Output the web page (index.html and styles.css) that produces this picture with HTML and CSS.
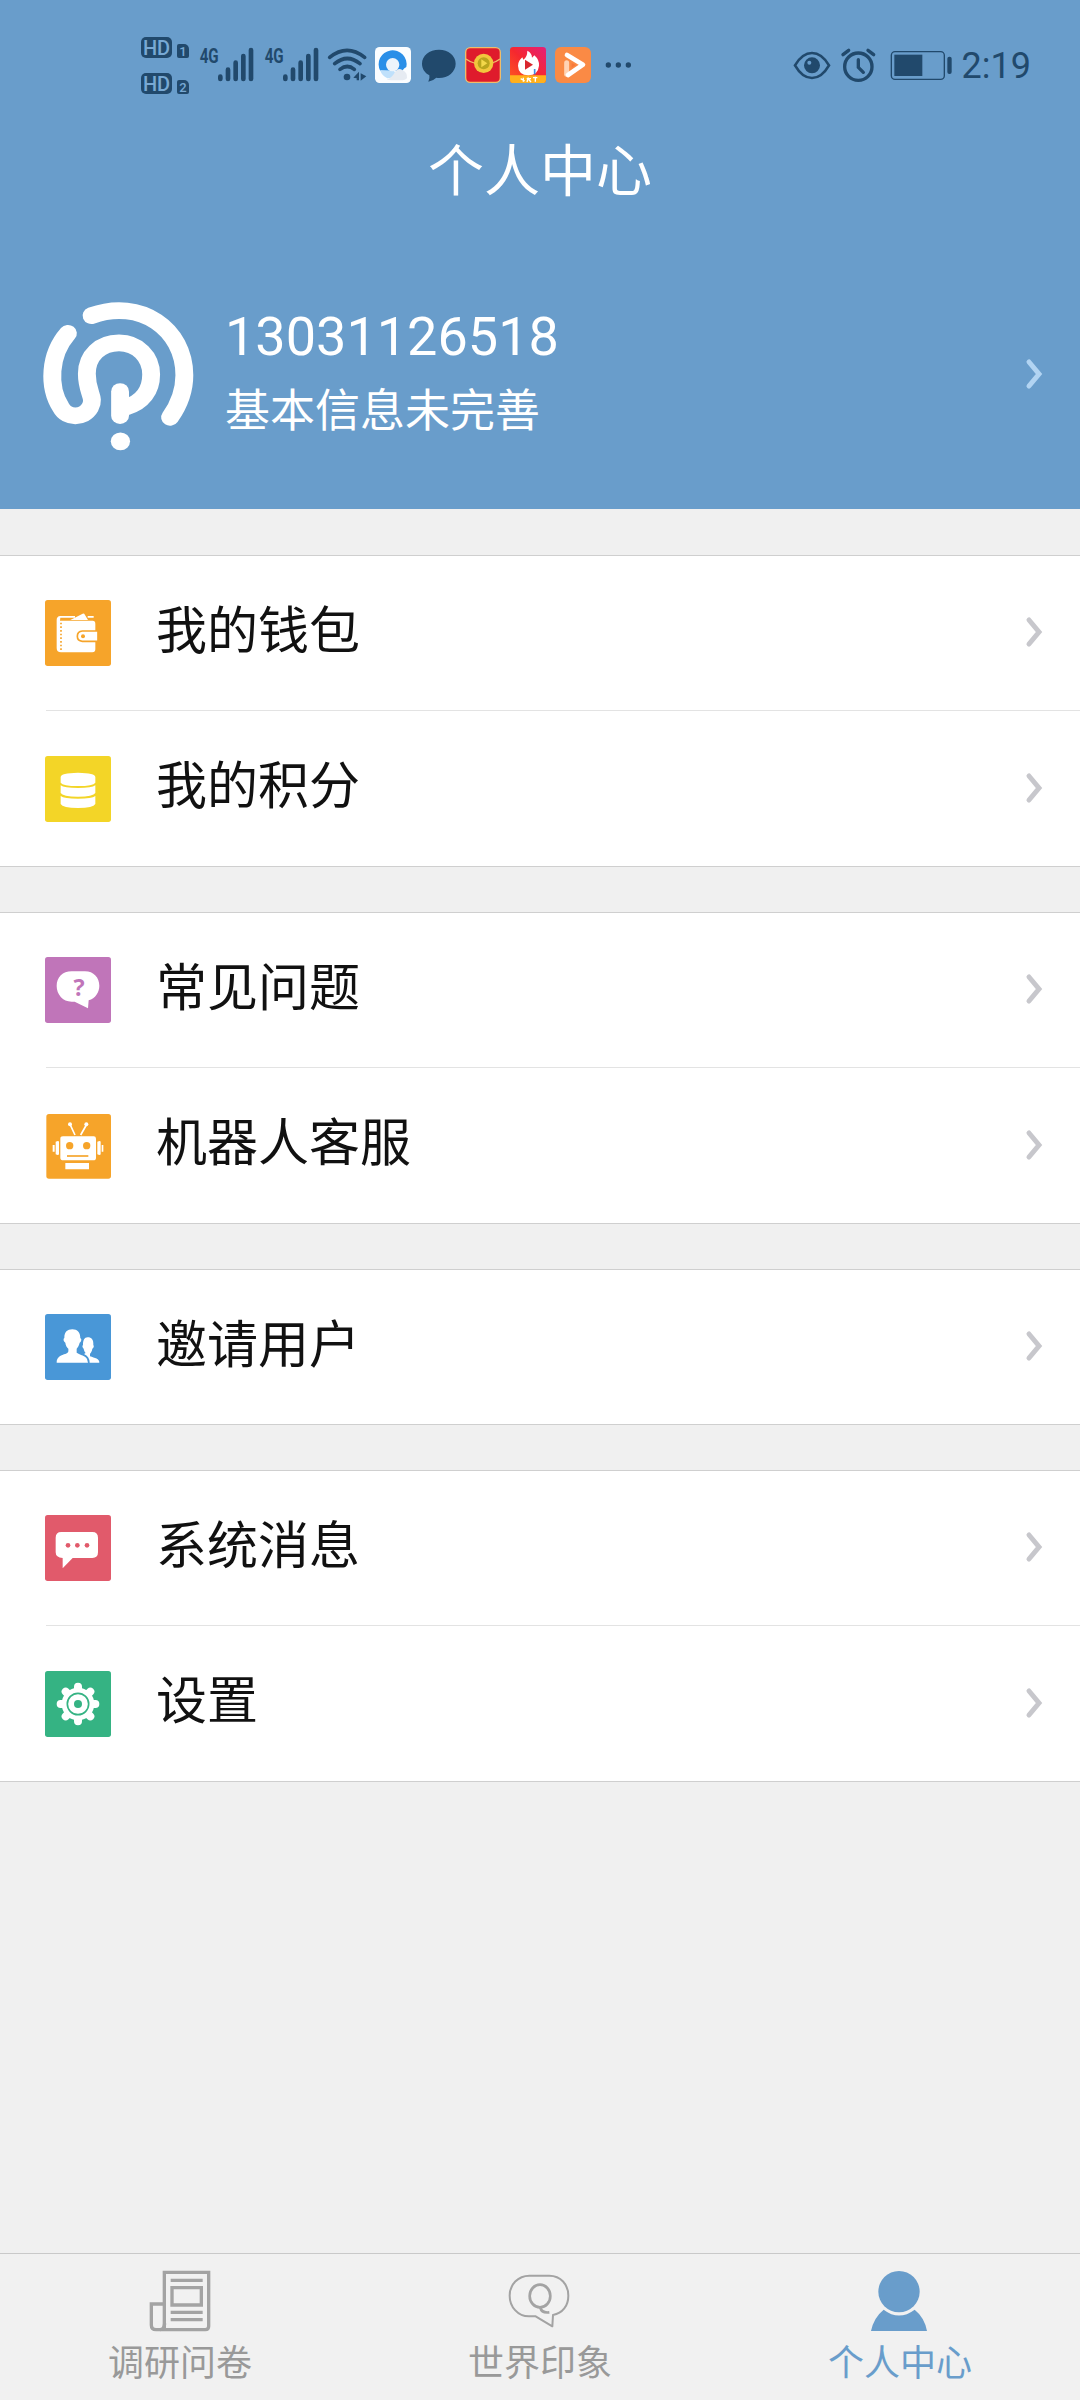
FILE: index.html
```html
<!DOCTYPE html>
<html lang="zh-CN">
<head>
  <meta charset="UTF-8" />
  <meta name="viewport" content="width=device-width, initial-scale=1.0"/>
  <title>个人中心</title>
  <link rel="stylesheet" href="styles.css">
</head>
<body>
  <header class="header">
    <div class="status-bar">
      <div class="status-left">
        <div class="hd-list">
          <div class="hd"><span class="hd-tag">HD</span><span class="hd-num">1</span></div>
          <div class="hd"><span class="hd-tag">HD</span><span class="hd-num">2</span></div>
        </div>
        <svg class="ink" width="55" height="44" viewBox="207 69 165 132">
          <text class="net" x="209" y="129" textLength="57" lengthAdjust="spacingAndGlyphs">4G</text>
          <path class="bars" d="M271 170v7M294 149v28M317 128v49M340 108v69M363 90v87"/>
        </svg>
        <svg class="ink" width="55" height="44" viewBox="204 69 165 132">
          <text class="net" x="209" y="129" textLength="57" lengthAdjust="spacingAndGlyphs">4G</text>
          <path class="bars" d="M271 170v7M294 149v28M317 128v49M340 108v69M363 90v87"/>
        </svg>
        <svg class="ink" width="39" height="36" viewBox="591 81 117 108">
          <path class="wifi" d="M599 112q52-42 105 0M614 131q38-31 76 0M630 148q22-17 43 0"/>
          <circle cx="651" cy="171" r="10"/>
          <path d="M670 173l17-18v26h-7v-6zM692 160l17 9-17 13z"/>
        </svg>
        <svg width="36" height="36" viewBox="15 81 108 108">
          <rect x="15" y="81" width="108" height="108" rx="14" fill="#fbfdff"/>
          <path d="M31 153a42 42 0 1 1 78-12q-7 3-13 13l-20-2z" fill="#2a8fe8"/>
          <path d="M30 150a42 42 0 0 0 22 25l30-3-10-20z" fill="#bfe0fb"/>
          <circle cx="68" cy="134" r="20" fill="#edf4fb"/>
          <path d="M50 178q14-3 24-20q9-16 23-8q16 8 14 24q-4 7-20 7H65q-10 0-15-3z" fill="#e6ebf2"/>
        </svg>
        <svg class="ink" width="36" height="36" viewBox="150 81 108 108">
          <path d="M207 89c28 0 50 18 50 42s-22 43-50 43q-4 0-8-1-9 9-24 12 5-9 3-19c-14-8-22-20-22-35 0-24 22-42 51-42z"/>
        </svg>
        <svg width="36" height="36" viewBox="285 81 108 108">
          <rect x="287" y="83" width="104" height="104" rx="14" fill="#df1b2c" stroke="#f0bd69" stroke-width="4"/>
          <path d="M288 117q20 15 51 15t51-15" fill="none" stroke="#f0bd69" stroke-width="4"/>
          <circle cx="341" cy="130" r="29" fill="#f2c73d"/>
          <circle cx="341" cy="130" r="18" fill="#b9a51d"/>
          <path d="M334 118l18 12-18 12z" fill="#f3d84a"/>
        </svg>
        <svg width="36" height="36" viewBox="420 81 108 108">
          <defs>
            <linearGradient id="fire" x1="0" x2="1" y1="1" y2="0">
              <stop offset="0" stop-color="#ff5a1f"/>
              <stop offset=".5" stop-color="#f5282f"/>
              <stop offset="1" stop-color="#e51f78"/>
            </linearGradient>
          </defs>
          <rect x="420" y="81" width="108" height="108" rx="10" fill="url(#fire)"/>
          <path d="M420 166h108v13q0 10-10 10h-88q-10 0-10-10z" fill="#ffb01c"/>
          <path d="M472 92q14 7 14 21l7-7q15 13 14 31-3 29-32 29-30-1-31-29 0-14 13-25l3 7q12-8 12-27z" fill="#fff"/>
          <path d="M465 119l24 15-24 15z" fill="#d9272e"/>
          <path d="M494 147v16" stroke="#438ce0" stroke-width="5"/>
          <path d="M452 176l12 7m-4-10v12m10-9h13m-8-4l-4 14m4-9l8 9m6-13h13m-6-3v15" stroke="#fff" stroke-width="4"/>
        </svg>
        <svg width="36" height="36" viewBox="555 81 108 108">
          <rect x="555" y="81" width="108" height="108" rx="18" fill="#fa8a45"/>
          <path d="M590 128v35" stroke="#ffd3b4" stroke-width="15" stroke-linecap="round"/>
          <path d="M591 105l48 29-45 31" fill="none" stroke="#fff" stroke-width="14" stroke-linecap="round" stroke-linejoin="round"/>
          <path d="M605 129l12 6-12 8z" fill="#f8783a"/>
        </svg>
        <svg class="ink" width="36" height="36" viewBox="690 81 108 108">
          <circle cx="715" cy="135" r="8"/><circle cx="745" cy="135" r="8"/><circle cx="775" cy="135" r="8"/>
        </svg>
      </div>
      <div class="status-right">
        <svg class="ink" width="36" height="36" viewBox="42 81 108 108">
          <path class="line" d="M45 136q22-37 51-37t51 37q-22 38-51 38t-51-38z"/>
          <circle cx="96" cy="136" r="24"/>
          <circle class="glint" cx="88" cy="128" r="6"/>
        </svg>
        <svg class="ink" width="34" height="36" viewBox="186 81 102 108">
          <circle class="line alarm" cx="235" cy="140" r="41"/>
          <path class="line alarm" d="M235 119v23l15 15M189 104l17-13M281 104l-17-13"/>
        </svg>
        <svg class="ink" width="64" height="36" viewBox="324 81 192 108">
          <rect class="thin" x="334" y="95" width="159" height="83" rx="11"/>
          <rect x="343" y="104" width="84" height="64"/>
          <rect x="502" y="110" width="13" height="52" rx="6"/>
        </svg>
        <span class="clock">2:19</span>
      </div>
    </div>
    <h1 class="title">个人中心</h1>
    <div class="profile">
      <svg class="avatar" width="150" height="154" viewBox="40 52 420 463" preserveAspectRatio="none">
        <path d="M173 105C310 52 433 145 433 284Q433 350 393 411"/>
        <path d="M107 158C55 222 50 318 88 382C104 414 151 415 169 381C185 350 160 338 160 280C160 225 198 187 250 187S340 229 340 282C340 330 315 366 270 380"/>
        <path d="M253 333v73"/>
        <circle cx="254" cy="483" r="27"/>
      </svg>
      <div class="profile-info">
        <div class="phone">13031126518</div>
        <div class="hint">基本信息未完善</div>
      </div>
      <svg class="arrow" width="18" height="32" viewBox="0 0 18 32"><path d="M4 3l10 12L4 27"/></svg>
    </div>
  </header>

  <main class="menu">
    <section class="group">
      <a class="row">
        <svg class="icon" viewBox="0 0 198 198">
          <rect width="198" height="198" rx="8" fill="#f6a42a"/>
          <path d="M45 62h98q8 0 8 9v77q0 9-9 9H48q-13 0-13-13V60q0-11 11-12h44v5H46z" fill="#fff"/>
          <path d="M76 60l37-19q5-1 7 4l9 15zM128 48h18v5h-18z" fill="#fff"/>
          <path d="M48 68v82" stroke="#f6a42a" stroke-width="5" stroke-dasharray="5 6"/>
          <path d="M159 93h-47q-15 1-15 16 0 14 15 15h47z" fill="#fff" stroke="#f6a42a" stroke-width="5"/>
          <circle cx="114" cy="109" r="6" fill="#f6a42a"/>
        </svg>
        <span class="label">我的钱包</span>
        <svg class="arrow" width="18" height="32" viewBox="0 0 18 32"><path d="M4 3l10 12L4 27"/></svg>
      </a>
      <a class="row">
        <svg class="icon" viewBox="0 0 198 198">
          <rect width="198" height="198" rx="8" fill="#f3d527"/>
          <path d="M47 63q0-12 52-13 52 1 52 13v17q-6 10-52 10-46 0-52-10zM47 88q10 8 52 8t52-8v23q-6 11-52 11-46 0-52-11zM47 120q10 8 52 8t52-8v24q-6 12-52 12-46 0-52-12z" fill="#fff"/>
        </svg>
        <span class="label">我的积分</span>
        <svg class="arrow" width="18" height="32" viewBox="0 0 18 32"><path d="M4 3l10 12L4 27"/></svg>
      </a>
    </section>

    <section class="group">
      <a class="row">
        <svg class="icon" viewBox="0 0 198 198">
          <rect width="198" height="198" rx="8" fill="#c075b9"/>
          <path d="M80 43h40c26 0 43 19 43 43 0 20-12 38-32 44l-2 24-40-20h-9c-27 0-45-22-45-47 0-26 18-44 45-44z" fill="#fff"/>
          <text class="ask" x="102" y="116" text-anchor="middle">?</text>
        </svg>
        <span class="label">常见问题</span>
        <svg class="arrow" width="18" height="32" viewBox="0 0 18 32"><path d="M4 3l10 12L4 27"/></svg>
      </a>
      <a class="row">
        <svg class="icon" viewBox="0 0 198 198">
          <rect x="4" y="3" width="194" height="194" rx="8" fill="#f6a42a"/>
          <path d="M90 66L76 36M107 66l17-30" stroke="#fff" stroke-width="5"/>
          <circle cx="75" cy="34" r="6" fill="#fff"/><circle cx="124" cy="34" r="6" fill="#fff"/>
          <path d="M54 70h92q7 0 7 7v57q0 8-8 8H55q-9 0-9-8V77q0-7 8-7zM61 150h71v19H61zM32 86q9-4 10 0v38q-2 4-10 0zM157 86q9-4 10 0v38q-2 4-10 0zM23 96h6v20h-6zM170 96h5v20h-5z" fill="#fff"/>
          <circle cx="74" cy="98" r="11" fill="#f6a42a"/><circle cx="125" cy="98" r="11" fill="#f6a42a"/>
          <path d="M66 129h64" stroke="#f6a42a" stroke-width="5"/>
        </svg>
        <span class="label">机器人客服</span>
        <svg class="arrow" width="18" height="32" viewBox="0 0 18 32"><path d="M4 3l10 12L4 27"/></svg>
      </a>
    </section>

    <section class="group">
      <a class="row">
        <svg class="icon" viewBox="0 0 198 198">
          <rect width="198" height="198" rx="8" fill="#4997d7"/>
          <path d="M82 46c15 0 24 9 24 27 5 1 3 11-2 13-2 9-6 14-9 18v12c10 7 27 9 31 19l3 11H35c0-15 9-20 22-25 12-4 14-5 13-17-4-4-8-9-9-18-6-3-7-12-3-14 0-18 9-26 24-26zM128 70c12 0 18 8 17 23 3 3 1 9-3 11-1 7-4 12-7 15v8c14 5 29 7 28 19h-29q0-18-17-26l5-3c-3-3-5-8-6-13-4-3-5-9-2-11 0-14 4-23 14-23z" fill="#fff"/>
        </svg>
        <span class="label">邀请用户</span>
        <svg class="arrow" width="18" height="32" viewBox="0 0 18 32"><path d="M4 3l10 12L4 27"/></svg>
      </a>
    </section>

    <section class="group">
      <a class="row">
        <svg class="icon" viewBox="0 0 198 198">
          <rect width="198" height="198" rx="8" fill="#e15a6b"/>
          <path d="M49 51h93q17 0 17 17v44q0 17-17 17H83l-30 31v-31q-21-1-21-17V68q0-17 17-17z" fill="#fff"/>
          <g fill="#e15a6b"><circle cx="69" cy="91" r="7"/><circle cx="97" cy="91" r="7"/><circle cx="126" cy="91" r="7"/></g>
        </svg>
        <span class="label">系统消息</span>
        <svg class="arrow" width="18" height="32" viewBox="0 0 18 32"><path d="M4 3l10 12L4 27"/></svg>
      </a>
      <a class="row">
        <svg class="icon" viewBox="0 0 198 198">
          <rect width="198" height="198" rx="8" fill="#35b383"/>
          <circle cx="99" cy="99" r="49" fill="#fff"/>
          <path d="M99 47v104M47 99h104M62 62l74 74M136 62l-74 74" stroke="#fff" stroke-width="24" stroke-linecap="round"/>
          <circle cx="99" cy="99" r="32" fill="none" stroke="#35b383" stroke-width="5"/>
          <circle cx="99" cy="99" r="12" fill="#35b383"/>
        </svg>
        <span class="label">设置</span>
        <svg class="arrow" width="18" height="32" viewBox="0 0 18 32"><path d="M4 3l10 12L4 27"/></svg>
      </a>
    </section>
  </main>

  <nav class="tabs">
    <a class="tab">
      <svg width="60" height="60" viewBox="180 93 180 180">
        <path class="paper" d="M223 269V97h133v162q0 10-10 10H198q-14 0-14-14v-63h39M246 143h88v52h-88z"/>
        <path class="paper" d="M242 121h96M242 217h96M242 239h96M224 250q-1 18-14 19"/>
      </svg>
      <span>调研问卷</span>
    </a>
    <a class="tab">
      <svg width="62" height="60" viewBox="1257 93 186 180">
        <path class="bubble" d="M1318 107h60c34 0 57 27 57 60 0 30-17 53-46 58l-2 34-50-30h-20c-34 0-58-29-58-62s25-60 59-60z"/>
        <ellipse class="letter" cx="1350" cy="168" rx="31" ry="34"/>
        <path class="letter" d="M1351 203q4 17 27 14"/>
      </svg>
      <span>世界印象</span>
    </a>
    <a class="tab active">
      <svg width="60" height="60" viewBox="270 93 180 180">
        <circle cx="357" cy="155" r="62"/>
        <path d="M311 209q46 35 93 0 30 24 37 64H273q8-40 38-64z"/>
      </svg>
      <span>个人中心</span>
    </a>
  </nav>
</body>
</html>
```
FILE: styles.css
```css
* {
  box-sizing: border-box;
}
body {
  margin: 0;
  min-height: 2400px;
  display: flex;
  flex-direction: column;
  background: #f0f0f0;
  color: #111;
  font-family: Roboto, "Noto Sans CJK SC", sans-serif;
}
svg {
  display: block;
  flex-shrink: 0;
  overflow: visible;
}
.header {
  height: 509px;
  background: #699dcb;
  color: #fff;
}

/* status bar */
.status-bar {
  height: 130px;
  padding: 0 49px 0 141px;
  display: flex;
  justify-content: space-between;
  align-items: center;
  color: #21496c;
}
.status-left {
  display: flex;
  align-items: center;
  gap: 9px;
}
.status-right {
  display: flex;
  align-items: center;
  gap: 12px;
}
.hd-list {
  width: 49px;
  display: flex;
  flex-direction: column;
  gap: 15px;
}
.hd {
  display: flex;
  align-items: flex-end;
  gap: 5px;
}
.hd-tag, .hd-num {
  background: #21496c;
  color: #78a9d4;
  font-weight: 500;
  text-align: center;
}
.hd-tag {
  width: 31px;
  height: 21px;
  border-radius: 5px;
  font-size: 20px;
  line-height: 22px;
}
.hd-num {
  width: 12px;
  height: 14px;
  border-radius: 2px 5px 2px 2px;
  font-size: 13px;
  line-height: 15px;
}
.ink {
  fill: #21496c;
}
.net {
  font-size: 60px;
  font-weight: 700;
}
.bars, .wifi, .line, .thin {
  fill: none;
  stroke: #21496c;
  stroke-linecap: round;
}
.bars {
  stroke-width: 14;
}
.wifi {
  stroke-width: 11;
}
.line {
  stroke-width: 8;
}
.line.alarm {
  stroke-width: 10;
}
.thin {
  stroke-width: 4;
}
.glint {
  fill: #699dcb;
}
.clock {
  margin-left: -2px;
  padding-top: 2px;
  font-size: 36px;
  line-height: 40px;
}

/* title and profile */
.title {
  height: 110px;
  margin: 0;
  padding-top: 2px;
  font-size: 56px;
  font-weight: 400;
  line-height: 80px;
  text-align: center;
}
.profile {
  height: 269px;
  padding: 0 37px 0 44px;
  display: flex;
  align-items: center;
}
.avatar {
  fill: none;
  stroke: #fff;
  stroke-width: 50;
  stroke-linecap: round;
  stroke-linejoin: round;
}
.avatar circle {
  fill: #fff;
  stroke: none;
}
.profile-info {
  flex: 1;
  margin-left: 31px;
  padding-bottom: 3px;
}
.phone {
  font-size: 54px;
  line-height: 78px;
}
.hint {
  font-size: 45px;
  line-height: 72px;
}
.arrow {
  fill: none;
  stroke: #c7c7cc;
  stroke-width: 5;
  stroke-linecap: round;
}
.profile .arrow {
  stroke: #b2d4f2;
}

/* menu */
.menu {
  flex: 1;
  padding-top: 46px;
}
.group {
  margin-bottom: 45px;
  background: #fff;
  border-top: 1px solid #cfcfcf;
  border-bottom: 1px solid #cfcfcf;
}
.row {
  height: 154px;
  padding-right: 37px;
  padding-left: 45px;
  display: flex;
  align-items: center;
}
.row + .row {
  height: 156px;
  border-top: 1px solid #e3e3e3;
  border-image: linear-gradient(to right, #fff 47px, #e3e3e3 47px) 1;
}
.icon {
  width: 66px;
  height: 66px;
}
.label {
  flex: 1;
  margin-left: 45px;
  padding-bottom: 3px;
  font-size: 51px;
  line-height: 72px;
}
.ask {
  fill: #c075b9;
  font: 700 70px "Open Sans", sans-serif;
}

/* bottom tabs */
.tabs {
  height: 147px;
  display: flex;
  border-top: 1px solid #c9c9c9;
  background: #f1f1f1;
}
.tab {
  flex: 1;
  padding-top: 17px;
  display: flex;
  flex-direction: column;
  align-items: center;
  color: #999;
  font-size: 36px;
  line-height: 52px;
}
.tab span {
  margin-top: 7px;
}
.tab.active {
  color: #699dcb;
  fill: #699dcb;
}
.paper, .bubble, .letter {
  fill: none;
  stroke: #a3a3a3;
}
.paper {
  stroke-width: 10;
}
.bubble {
  stroke-width: 6;
  stroke-linejoin: round;
}
.letter {
  stroke-width: 8;
}
```
